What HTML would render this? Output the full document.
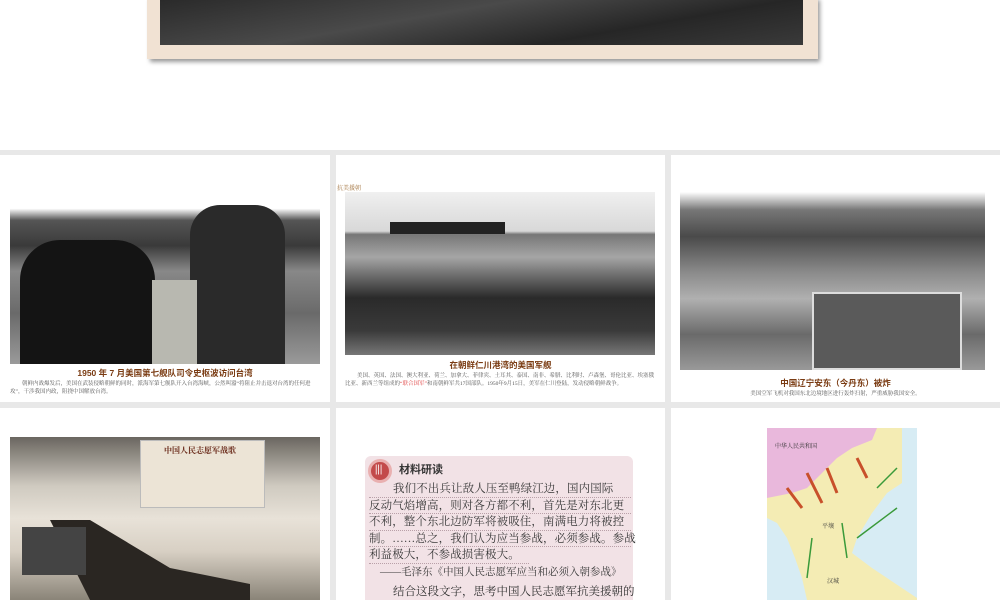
<!DOCTYPE html>
<html><head><meta charset="utf-8"><style>
*{margin:0;padding:0;box-sizing:border-box}
body{width:1000px;height:600px;overflow:hidden;background:#fff;position:relative;font-family:"Liberation Serif","Noto Serif CJK SC",serif}
.a{position:absolute}
.p{position:absolute;background:#fff}
.cap{position:absolute;text-align:center;color:#7a3b12;font-family:"Liberation Sans","Noto Sans CJK SC",sans-serif;font-size:8.5px;font-weight:bold}
.txt{position:absolute;color:#555;font-size:5.5px;line-height:8px}
.ln{white-space:nowrap;font-size:11.5px;letter-spacing:0.1px;color:#3a3a3a;height:16.5px;line-height:16.5px;border-bottom:1px dotted #b9a0a8}
</style></head><body>
<div class="a" style="left:150px;top:0;width:670px;height:62px;background:#9a9a9a;filter:blur(2px)"></div>
<div class="a" style="left:147px;top:0;width:671px;height:59px;background:#f1e2d3"></div>
<div class="a" style="left:160px;top:0;width:643px;height:45px;background:linear-gradient(170deg,#2a2a2a,#4a4a4a 40%,#262626 70%,#3a3a3a)"></div>
<div class="a" style="left:0;top:150px;width:1000px;height:450px;background:#e8e8e8"></div>
<div class="p" style="left:0;top:155px;width:330px;height:247px"></div>
<div class="p" style="left:336px;top:155px;width:329px;height:247px"></div>
<div class="p" style="left:671px;top:155px;width:329px;height:247px"></div>
<div class="p" style="left:0;top:408px;width:330px;height:192px"></div>
<div class="p" style="left:336px;top:408px;width:329px;height:192px"></div>
<div class="p" style="left:671px;top:408px;width:329px;height:192px"></div>
<div class="a" style="left:10px;top:195px;width:310px;height:169px;background:linear-gradient(180deg,#fff 0,#fff 8%,#555 15%,#3a3a3a 30%,#888 45%,#6a6a6a 70%,#9a9a9a 100%)"></div>
<div class="a" style="left:20px;top:240px;width:135px;height:124px;background:#141414;border-radius:40px 40px 0 0"></div>
<div class="a" style="left:190px;top:205px;width:95px;height:159px;background:#2a2a2a;border-radius:30px 30px 0 0"></div>
<div class="a" style="left:152px;top:280px;width:45px;height:84px;background:#b8b8b0"></div>
<div class="cap" style="left:0;top:367px;width:330px">1950 年 7 月美国第七舰队司令史枢波访问台湾</div>
<div class="txt" style="left:10px;top:380px;width:312px;text-indent:12px">朝鲜内战爆发后，美国在武装侵略朝鲜的同时，派海军第七舰队开入台湾海峡，公然叫嚣“将阻止并击退对台湾的任何进攻”，干涉我国内政，阻挠中国解放台湾。</div>
<div class="a" style="left:337px;top:183px;font-size:6px;color:#a0703a">抗美援朝</div>
<div class="a" style="left:345px;top:192px;width:310px;height:163px;background:linear-gradient(180deg,#f0f0f0 0,#d8d8d8 24%,#777 26%,#a5a5a5 40%,#5a5a5a 55%,#2a2a2a 65%,#3a3a3a 85%,#777 100%)"></div>
<div class="a" style="left:390px;top:222px;width:115px;height:12px;background:#222"></div>
<div class="cap" style="left:336px;top:359px;width:329px">在朝鲜仁川港湾的美国军舰</div>
<div class="txt" style="left:345px;top:372px;width:312px;text-indent:12px">美国、英国、法国、澳大利亚、荷兰、加拿大、菲律宾、土耳其、泰国、南非、希腊、比利时、卢森堡、哥伦比亚、埃塞俄比亚、新西兰等组成的<span style="color:#d33">“联合国军”</span>和南朝鲜军共17国部队。1950年9月15日，美军在仁川登陆，发动侵略朝鲜战争。</div>
<div class="a" style="left:680px;top:192px;width:305px;height:178px;background:linear-gradient(180deg,#fff 0,#777 10%,#4a4a4a 25%,#8a8a8a 45%,#b0b0b0 60%,#6a6a6a 80%,#999 100%)"></div>
<div class="a" style="left:812px;top:292px;width:150px;height:78px;background:#5a5a5a;border:2px solid #ddd"></div>
<div class="cap" style="left:671px;top:377px;width:329px">中国辽宁安东（今丹东）被炸</div>
<div class="txt" style="left:671px;top:390px;width:329px;text-align:center">美国空军飞机对我国东北边境地区进行轰炸扫射，严重威胁我国安全。</div>
<div class="a" style="left:10px;top:437px;width:310px;height:163px;background:linear-gradient(180deg,#6a6660 0,#cfcac0 30%,#e8e2d8 50%,#d8d0c4 70%,#8a8478 100%)"></div>
<div class="a" style="left:140px;top:440px;width:125px;height:68px;background:#ece4d6;border:1px solid #bbb"></div>
<div class="a" style="left:135px;top:445px;font-size:8px;width:130px;text-align:center;color:#6a2a1a;font-weight:bold">中国人民志愿军战歌</div>
<div class="a" style="left:50px;top:520px;width:200px;height:80px;background:#2a2622;clip-path:polygon(0 0,20% 0,60% 60%,100% 80%,100% 100%,20% 100%)"></div>
<div class="a" style="left:22px;top:527px;width:64px;height:48px;background:#444"></div>
<div class="a" style="left:365px;top:456px;width:268px;height:144px;background:#f2e2e6;border-radius:6px 6px 0 0"></div>
<div class="a" style="left:368px;top:459px;width:24px;height:24px;border-radius:50%;background:#c34a4a;border:3px solid #e9b0b0"></div>
<div class="a" style="left:375px;top:463px;color:#fff;font-weight:bold;font-size:11px">|||</div>
<div class="a" style="left:399px;top:461px;font-family:'Liberation Sans','Noto Sans CJK SC',sans-serif;font-weight:bold;font-size:11px;color:#333">材料研读</div>
<div class="a" style="left:369px;top:481px;width:262px">
<div class="ln" style="padding-left:24px">我们不出兵让敌人压至鸭绿江边，国内国际</div>
<div class="ln">反动气焰增高，则对各方都不利，首先是对东北更</div>
<div class="ln">不利，整个东北边防军将被吸住，南满电力将被控</div>
<div class="ln">制。……总之，我们认为应当参战，必须参战。参战</div>
<div class="ln" style="width:160px">利益极大，不参战损害极大。</div>
</div>
<div class="a" style="left:380px;top:564px;font-size:10.5px;color:#3a3a3a;white-space:nowrap">——毛泽东《中国人民志愿军应当和必须入朝参战》</div>
<div class="a" style="left:393px;top:583px;font-size:11.5px;color:#333;white-space:nowrap">结合这段文字，思考中国人民志愿军抗美援朝的</div>
<div class="a" style="left:767px;top:428px;width:150px;height:172px;background:#d7ecf4;overflow:hidden">
<svg width="150" height="172" viewBox="0 0 150 172">
<path d="M0 0H135V55L120 65 105 85 90 110 85 125 105 140 120 150 150 170V172H40L35 150 28 130 20 110 10 95 0 90Z" fill="#f4ecb4"/>
<path d="M0 0H110L105 12 85 20 70 30 55 45 40 60 25 65 0 70Z" fill="#e9b8dc"/>
<path d="M60 40 L70 65 M40 45 L55 75 M20 60 L35 80 M90 30 L100 50" stroke="#c8502a" stroke-width="3"/>
<path d="M40 150 L45 110 M80 130 L75 95 M90 110 L130 80 M110 60 L130 40" stroke="#3a9a3a" stroke-width="1.5"/>
<text x="8" y="20" font-size="6" fill="#333">中华人民共和国</text>
<text x="55" y="100" font-size="6" fill="#333">平壤</text>
<text x="60" y="155" font-size="6" fill="#333">汉城</text>
</svg></div>
</body></html>
